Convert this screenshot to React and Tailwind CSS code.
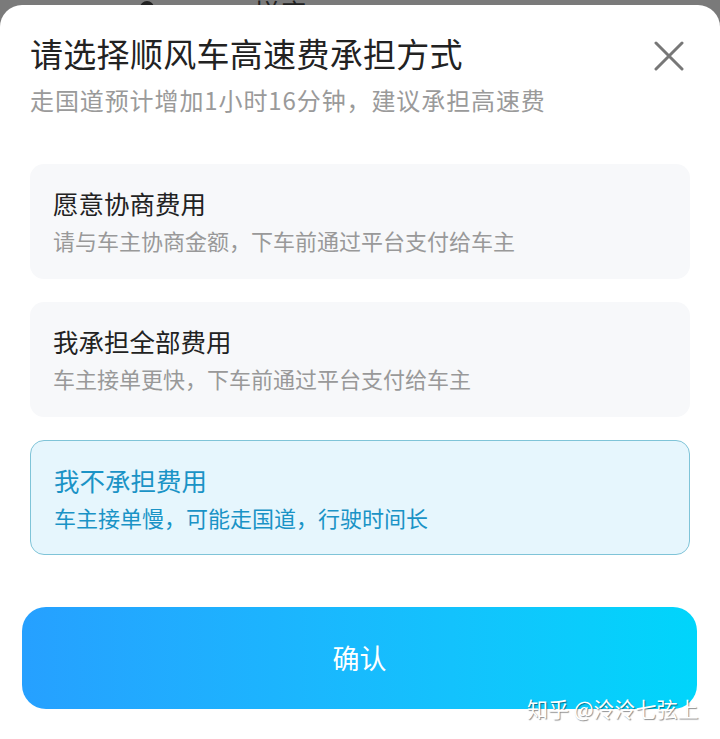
import React, { useState } from "react";

const options = [
  { title: "愿意协商费用", desc: "请与车主协商金额，下车前通过平台支付给车主" },
  { title: "我承担全部费用", desc: "车主接单更快，下车前通过平台支付给车主" },
  { title: "我不承担费用", desc: "车主接单慢，可能走国道，行驶时间长" },
];

const App = () => {
  const [selected, setSelected] = useState(2);

  return (
    <div
      className="relative w-[720px] h-[739px] bg-[#7a7a7a] overflow-hidden"
      style={{ fontFamily: '"Noto Sans CJK SC", "Noto Sans", sans-serif' }}
    >
      {/* page behind the sheet */}
      <div className="h-[5px] overflow-hidden flex items-end pl-[140px] gap-[100px]">
        <div className="w-[14px] h-[14px] rounded-full bg-[#222] mb-[-10px]"></div>
        <div className="text-[26px] leading-none text-[#222] mb-[-20px]">拼座</div>
      </div>

      {/* sheet */}
      <div className="bg-white rounded-t-[22px] h-[734px] flex flex-col">
        <div className="flex justify-between pt-[26px] pl-[30px] pr-[36px]">
          <div>
            <div className="text-[33px] leading-[44px] text-[#222] tracking-[0.3px]">请选择顺风车高速费承担方式</div>
            <div className="text-[24px] leading-[32px] mt-[9px] text-[#9a9a9a] tracking-[0.9px]">
              走国道预计增加1小时16分钟，建议承担高速费
            </div>
          </div>
          <svg width="30" height="30" viewBox="0 0 30 30" className="mt-[10px]">
            <path d="M2 2 L28 28 M28 2 L2 28" stroke="#777" strokeWidth="3" strokeLinecap="round" />
          </svg>
        </div>

        <div className="flex flex-col gap-[23px] px-[30px] mt-[48px]">
          {options.map((o, i) => {
            const active = i === selected;
            return (
              <div
                key={i}
                onClick={() => setSelected(i)}
                className={`h-[115px] rounded-[14px] pl-[23px] pt-[21px] cursor-pointer ${
                  active
                    ? "bg-[#e6f6fd] border border-[#7fc4d8] pl-[22px] pt-[20px]"
                    : "bg-[#f7f8fa]"
                }`}
              >
                <div className={`text-[25.5px] leading-[36px] ${active ? "text-[#1a93c6]" : "text-[#222]"}`}>
                  {o.title}
                </div>
                <div className={`text-[22px] leading-[30px] mt-[4px] ${active ? "text-[#1a93c6]" : "text-[#999]"}`}>
                  {o.desc}
                </div>
              </div>
            );
          })}
        </div>

        <div className="px-[22px] mt-[52px] pr-[23px]">
          <div className="h-[102px] rounded-[24px] bg-gradient-to-r from-[#26a0ff] to-[#00d5fb] flex items-center justify-center text-white text-[27px]">
            确认
          </div>
        </div>
      </div>

      {/* watermark */}
      <div
        className="absolute left-[527px] top-[693px] text-[21px] leading-[30px] text-white"
        style={{ textShadow: "1px 1px 1px rgba(0,0,0,0.45)" }}
      >
        知乎 @泠泠七弦上
      </div>
    </div>
  );
};

export default App;
